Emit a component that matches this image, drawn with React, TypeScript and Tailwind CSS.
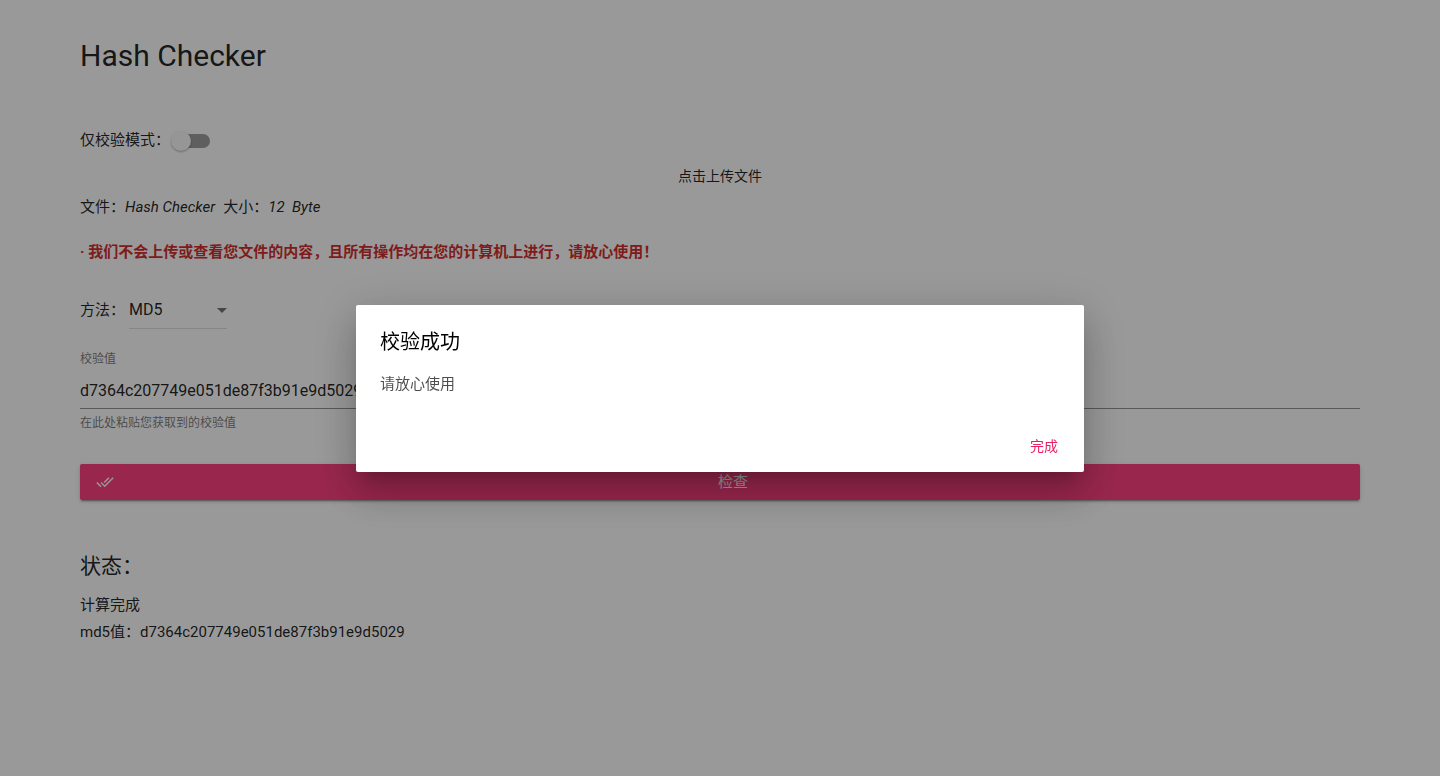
import { useState } from "react";

const hash = "d7364c207749e051de87f3b91e9d5029";

function DoneAllIcon() {
  return (
    <svg viewBox="0 0 24 24" className="h-[18px] w-[18px]" fill="currentColor" aria-hidden="true">
      <path d="M18 7l-1.41-1.41-6.34 6.34 1.41 1.41L18 7zm4.24-1.41L11.66 16.17 7.48 12l-1.41 1.41L11.66 19l12-12-1.42-1.41zM.41 13.41L6 19l1.41-1.41L1.83 12 .41 13.41z" />
    </svg>
  );
}

function VerifyOnlySwitch() {
  return (
    <label className="flex h-9 items-center text-[15px]">
      <span>仅校验模式：</span>
      <span className="relative flex h-5 w-10 items-center justify-end">
        <input type="checkbox" className="peer sr-only" />
        <span className="mt-0.5 h-3.5 w-9 rounded-full bg-[#9e9e9e] peer-checked:bg-[#ff4081]/50" />
        <span className="absolute top-px left-px h-5 w-5 rounded-full bg-[#fafafa] shadow-[0_1px_2px_rgba(0,0,0,0.3)] peer-checked:left-5 peer-checked:bg-[#ff4081]" />
      </span>
    </label>
  );
}

function MethodSelect() {
  return (
    <div className="mt-[26px] flex items-center gap-1 text-[15px]">
      <label htmlFor="method">方法：</label>
      <div className="relative">
        <select
          id="method"
          defaultValue="MD5"
          className="h-[37px] w-[98px] appearance-none border-b border-black/12 bg-transparent text-base text-black/87 outline-none"
        >
          <option>MD5</option>
          <option>SHA1</option>
          <option>SHA256</option>
        </select>
        <svg
          viewBox="0 0 10 5"
          className="pointer-events-none absolute top-4 right-0 h-[5px] w-[10px] text-black/54"
          fill="currentColor"
          aria-hidden="true"
        >
          <path d="M0 0l5 5 5-5z" />
        </svg>
      </div>
    </div>
  );
}

function HashField() {
  return (
    <div className="mt-5 flex flex-col text-xs leading-5 text-black/54">
      <label htmlFor="hash">校验值</label>
      <input
        id="hash"
        defaultValue={hash}
        aria-describedby="hash-help"
        className="mt-1 h-9 w-full border-b border-black/42 bg-transparent text-base text-black/87 outline-none"
      />
      <p id="hash-help" className="mt-1">
        在此处粘贴您获取到的校验值
      </p>
    </div>
  );
}

function SuccessDialog({ onClose }: { onClose: () => void }) {
  return (
    <div className="fixed inset-0 flex items-center justify-center bg-black/40 p-6">
      <div
        role="dialog"
        aria-modal="true"
        aria-labelledby="dialog-title"
        className="w-full max-w-[728px] rounded-xs bg-white shadow-[0_11px_15px_-7px_rgba(0,0,0,0.2),0_24px_38px_3px_rgba(0,0,0,0.14),0_9px_46px_8px_rgba(0,0,0,0.12)]"
      >
        <h2 id="dialog-title" className="px-6 pt-6 text-xl leading-[26px] text-black">
          校验成功
        </h2>
        <p className="px-6 pt-[17px] pb-8 text-[15px] leading-6 text-black/70">请放心使用</p>
        <div className="flex justify-end p-2 pt-0">
          <button type="button" onClick={onClose} className="h-9 rounded-xs px-[18px] text-sm text-[#e91e63]">
            完成
          </button>
        </div>
      </div>
    </div>
  );
}

export default function App() {
  const [open, setOpen] = useState(true);
  return (
    <div className="min-h-screen bg-white font-[Roboto,'Noto_Sans_CJK_SC',sans-serif] text-[15px] text-black/87">
      <main className="px-20 pt-9 pb-10">
        <h1 className="text-[30px] leading-10">Hash Checker</h1>
        <div className="mt-[46px]">
          <VerifyOnlySwitch />
        </div>
        <button type="button" className="block h-9 w-full text-sm">
          点击上传文件
        </button>
        <p className="flex gap-2 leading-[26px]">
          <span>
            文件：<i>Hash Checker</i>
          </span>
          <span>
            大小：<i className="whitespace-pre">12  Byte</i>
          </span>
        </p>
        <p className="mt-[18px] leading-7 font-bold text-[#d32f2f]">
          · 我们不会上传或查看您文件的内容，且所有操作均在您的计算机上进行，请放心使用！
        </p>
        <MethodSelect />
        <HashField />
        <button
          type="button"
          onClick={() => setOpen(true)}
          className="mt-[31px] flex h-9 w-full items-center rounded-xs bg-[#ff4081] px-4 text-[15px] text-white shadow-[0_3px_1px_-2px_rgba(0,0,0,0.2),0_2px_2px_rgba(0,0,0,0.14),0_1px_5px_rgba(0,0,0,0.12)]"
        >
          <DoneAllIcon />
          <span className="grow pl-2">检查</span>
        </button>
        <h2 className="mt-[50px] text-[21px] leading-8">状态：</h2>
        <p className="mt-2.5 leading-[27px]">计算完成</p>
        <p className="leading-[27px]">md5值：{hash}</p>
      </main>
      {open && <SuccessDialog onClose={() => setOpen(false)} />}
    </div>
  );
}
